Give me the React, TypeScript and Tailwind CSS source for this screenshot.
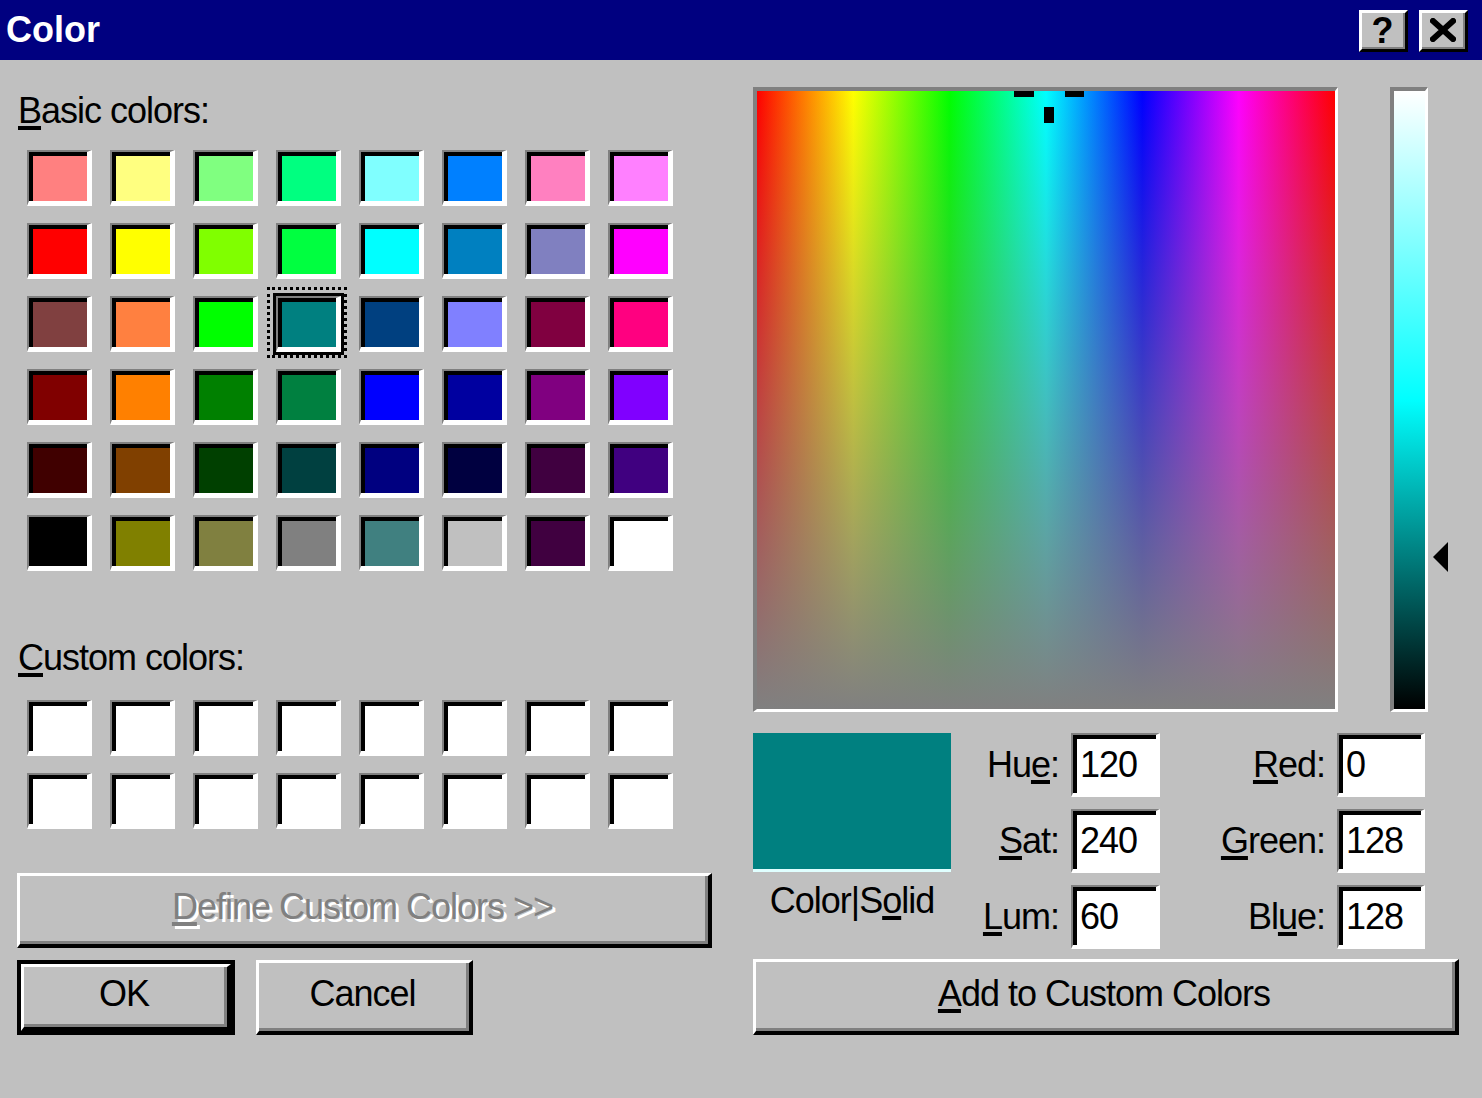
import React from 'react';

const basicColors = [
  'bg-[#ff8080]', 'bg-[#ffff80]', 'bg-[#80ff80]', 'bg-[#00ff80]', 'bg-[#80ffff]', 'bg-[#0080ff]', 'bg-[#ff80c0]', 'bg-[#ff80ff]',
  'bg-[#ff0000]', 'bg-[#ffff00]', 'bg-[#80ff00]', 'bg-[#00ff40]', 'bg-[#00ffff]', 'bg-[#0080c0]', 'bg-[#8080c0]', 'bg-[#ff00ff]',
  'bg-[#804040]', 'bg-[#ff8040]', 'bg-[#00ff00]', 'bg-[#008080]', 'bg-[#004080]', 'bg-[#8080ff]', 'bg-[#800040]', 'bg-[#ff0080]',
  'bg-[#800000]', 'bg-[#ff8000]', 'bg-[#008000]', 'bg-[#008040]', 'bg-[#0000ff]', 'bg-[#0000a0]', 'bg-[#800080]', 'bg-[#8000ff]',
  'bg-[#400000]', 'bg-[#804000]', 'bg-[#004000]', 'bg-[#004040]', 'bg-[#000080]', 'bg-[#000040]', 'bg-[#400040]', 'bg-[#400080]',
  'bg-[#000000]', 'bg-[#808000]', 'bg-[#808040]', 'bg-[#808080]', 'bg-[#408080]', 'bg-[#c0c0c0]', 'bg-[#400040]', 'bg-[#ffffff]',
];

const SELECTED = 19;

const U = ({ children }: { children: React.ReactNode }) => (
  <span className="underline decoration-[4px] underline-offset-[3px]">{children}</span>
);

function Swatch({ color, selected }: { color: string; selected?: boolean }) {
  return (
    <div
      className={`relative h-[56px] w-[65px] border-t-2 border-l-2 border-b-[5px] border-r-[5px] border-t-[#808080] border-l-[#808080] border-b-white border-r-white ${
        selected ? 'shadow-[0_0_0_3px_#000]' : ''
      }`}
    >
      <div className={`h-full w-full border-t-4 border-l-4 border-black ${color}`} />
      {selected && <div className="absolute -inset-[11px] border-[3px] border-dotted border-black" />}
    </div>
  );
}

function Field({ value }: { value: string }) {
  return (
    <div className="h-[64px] border-t-2 border-l-2 border-b-[4px] border-r-[4px] border-t-[#808080] border-l-[#808080] border-b-white border-r-white">
      <div className="flex h-full items-center border-t-4 border-l-4 border-black bg-white pl-[3px] pb-[2px]">{value}</div>
    </div>
  );
}

function Button({
  children,
  isDefault,
  className,
}: {
  children: React.ReactNode;
  isDefault?: boolean;
  className: string;
}) {
  return (
    <div className={`${className} ${isDefault ? 'border-[4px] border-black' : ''}`}>
      <div className="h-full border-t-[3px] border-l-[3px] border-r-[4px] border-b-[4px] border-t-white border-l-white border-r-black border-b-black">
        <div className="flex h-full items-center justify-center border-r-[3px] border-b-[3px] border-r-[#808080] border-b-[#808080] pb-[3px]">
          {children}
        </div>
      </div>
    </div>
  );
}

function TitleButton({ children }: { children: React.ReactNode }) {
  return (
    <div className="h-[42px] w-[49px] border-t-[3px] border-l-[3px] border-r-[3px] border-b-[3px] border-t-white border-l-white border-r-black border-b-black bg-[#c0c0c0]">
      <div className="flex h-full items-center justify-center border-r-[2px] border-b-[2px] border-r-[#808080] border-b-[#808080]">
        {children}
      </div>
    </div>
  );
}

export default function App() {
  return (
    <div className="h-[1098px] w-[1482px] overflow-hidden bg-[#c0c0c0] font-['Liberation_Sans',Arial,sans-serif] text-[36px] leading-none tracking-[-1px] text-black">
      {/* Title bar */}
      <div className="flex h-[60px] items-center justify-between bg-[#000080] pl-[6px] pr-[14px]">
        <span className="text-[36px] font-bold tracking-normal text-white">Color</span>
        <div className="flex gap-[11px] pt-[2px]">
          <TitleButton>
            <span className="pt-[2px] text-[36px] font-black tracking-normal">?</span>
          </TitleButton>
          <TitleButton>
            <svg width="26" height="24" viewBox="0 0 26 24">
              <path d="M3 3 L23 21 M23 3 L3 21" stroke="#000" strokeWidth="6" strokeLinecap="square" />
            </svg>
          </TitleButton>
        </div>
      </div>

      <div className="flex">
        {/* Left column */}
        <div className="ml-[18px] flex w-[694px] flex-col">
          <div className="mt-[33px] h-[36px]">
            <U>B</U>asic colors:
          </div>
          <div className="mt-[21px] grid grid-cols-[repeat(8,65px)] gap-x-[18px] gap-y-[17px] pl-[9px]">
            {basicColors.map((c, i) => (
              <Swatch key={i} color={c} selected={i === SELECTED} />
            ))}
          </div>

          <div className="mt-[69px] h-[36px]">
            <U>C</U>ustom colors:
          </div>
          <div className="mt-[24px] grid grid-cols-[repeat(8,65px)] gap-x-[18px] gap-y-[17px] pl-[9px]">
            {Array.from({ length: 16 }).map((_, i) => (
              <Swatch key={i} color="bg-white" />
            ))}
          </div>

          <Button className="-ml-px mt-[44px] h-[75px] w-[695px]">
            <span className="text-[#808080] [text-shadow:3px_3px_0_#fff]">
              <U>D</U>efine Custom Colors &gt;&gt;
            </span>
          </Button>

          <div className="-ml-px mt-[12px] flex gap-[21px]">
            <Button isDefault className="h-[75px] w-[218px]">
              OK
            </Button>
            <Button className="h-[75px] w-[217px]">Cancel</Button>
          </div>
        </div>

        {/* Right column */}
        <div className="ml-[41px] flex w-[706px] flex-col">
          <div className="mt-[27px] flex">
            <div className="relative h-[625px] w-[585px] border-t-4 border-l-4 border-b-[3px] border-r-[3px] border-t-[#808080] border-l-[#808080] border-b-white border-r-white bg-[linear-gradient(to_right,#f00,#ff0,#0f0,#0ff,#00f,#f0f,#f00)]">
              <div className="h-full w-full bg-[linear-gradient(to_bottom,rgba(128,128,128,0),#808080)]" />
              <div className="absolute left-[257px] top-0 h-[6px] w-[20px] bg-black" />
              <div className="absolute left-[308px] top-0 h-[6px] w-[19px] bg-black" />
              <div className="absolute left-[287px] top-[16px] h-[16px] w-[10px] bg-black" />
            </div>
            <div className="relative ml-[52px] w-[60px]">
              <div className="h-[625px] w-[38px] border-t-4 border-l-4 border-b-[3px] border-r-[3px] border-t-[#808080] border-l-[#808080] border-b-white border-r-white bg-[linear-gradient(to_bottom,#fff,#0ff_50%,#000)]" />
              <svg className="absolute left-[43px] top-[455px]" width="16" height="30" viewBox="0 0 16 30">
                <path d="M0 15 L15 0 L15 30 Z" fill="#000" />
              </svg>
            </div>
          </div>

          <div className="mt-[21px] flex">
            <div className="flex w-[198px] flex-col items-center">
              <div className="h-[139px] w-[198px] border-b-[3px] border-b-[#e0ffff] bg-[#008080]" />
              <div className="mt-[11px] h-[36px]">
                Color|S<U>o</U>lid
              </div>
            </div>
            <div className="grid grid-cols-[108px_89px_153px_88px] grid-rows-[64px_64px_64px] gap-x-[12px] gap-y-[12px]">
              <div className="flex items-center justify-end">
                Hu<U>e</U>:
              </div>
              <Field value="120" />
              <div className="flex items-center justify-end">
                <U>R</U>ed:
              </div>
              <Field value="0" />

              <div className="flex items-center justify-end">
                <U>S</U>at:
              </div>
              <Field value="240" />
              <div className="flex items-center justify-end">
                <U>G</U>reen:
              </div>
              <Field value="128" />

              <div className="flex items-center justify-end">
                <U>L</U>um:
              </div>
              <Field value="60" />
              <div className="flex items-center justify-end">
                Bl<U>u</U>e:
              </div>
              <Field value="128" />
            </div>
          </div>

          <Button className="mt-[10px] h-[76px] w-[706px]">
            <span>
              <U>A</U>dd to Custom Colors
            </span>
          </Button>
        </div>
      </div>
    </div>
  );
}
